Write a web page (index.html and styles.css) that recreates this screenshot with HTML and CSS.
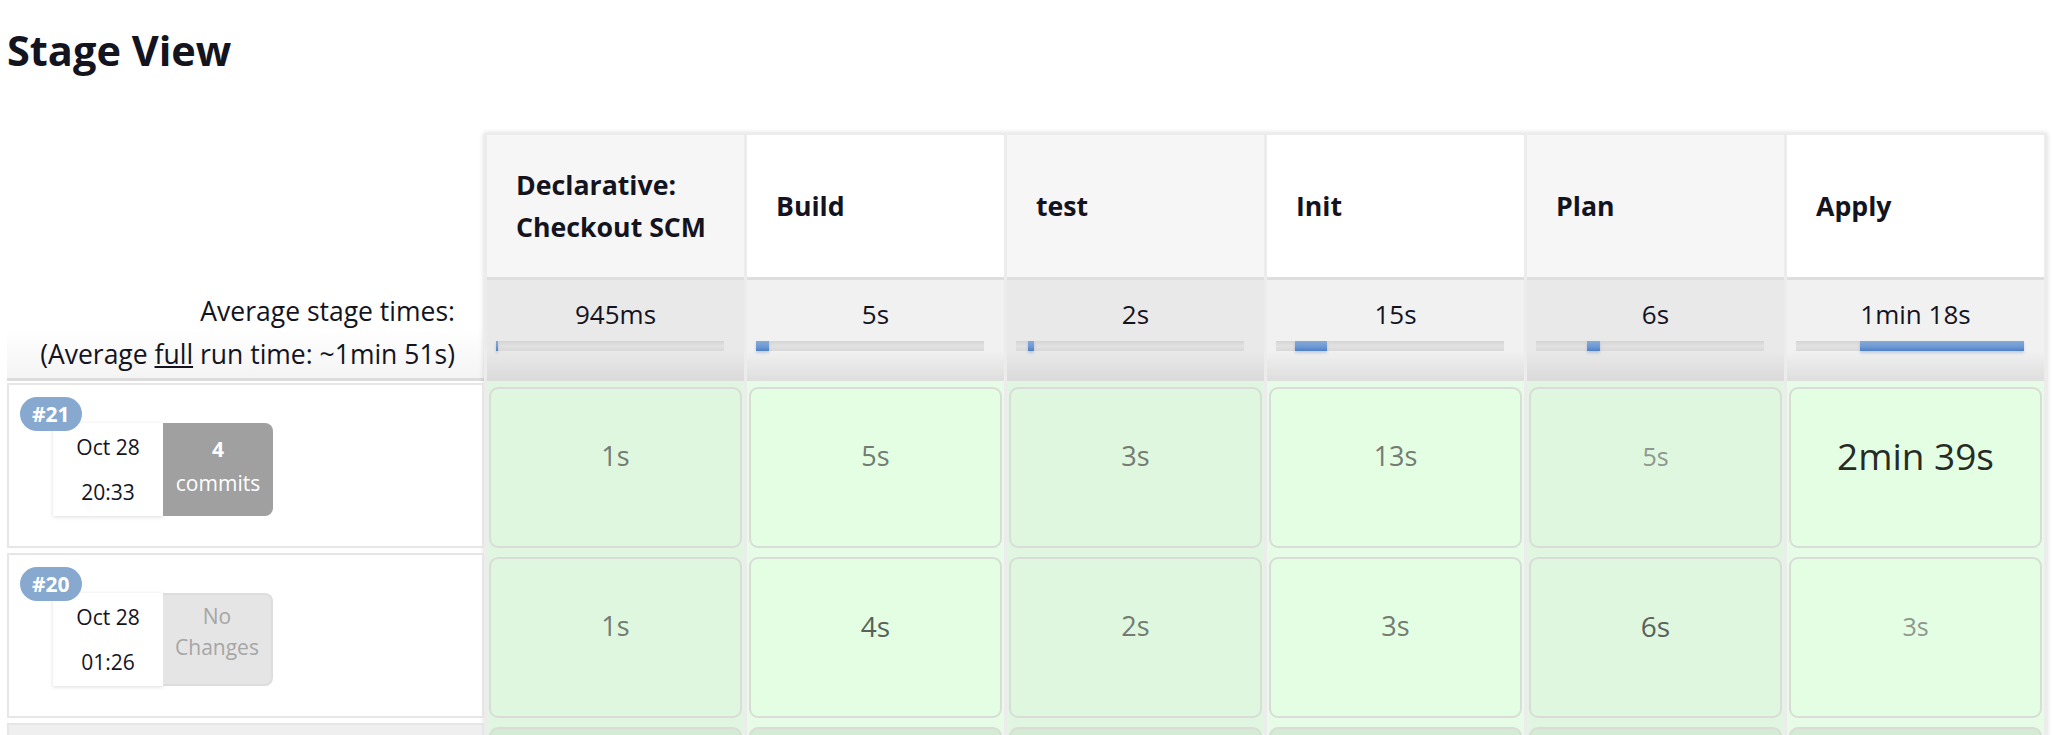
FILE: index.html
```html
<!DOCTYPE html>
<html>
<head>
<meta charset="utf-8">
<title>Stage View</title>
<link rel="stylesheet" href="styles.css">
</head>
<body>
<h2 class="title">Stage View</h2>
<div class="stage-view">
  <div class="left">
    <div class="left-head">
      <div class="avg-label">Average stage times:<br>(Average <u>full</u> run time: ~1min 51s)</div>
    </div>
    <div class="build-row">
      <div class="build-box">
        <span class="badge">#21</span>
        <div class="build-info">
          <div class="date">Oct 28<br>20:33</div>
          <div class="changes commits"><b>4</b><br>commits</div>
        </div>
      </div>
    </div>
    <div class="build-row">
      <div class="build-box">
        <span class="badge">#20</span>
        <div class="build-info">
          <div class="date">Oct 28<br>01:26</div>
          <div class="changes none">No<br>Changes</div>
        </div>
      </div>
    </div>
    <div class="build-row">
      <div class="build-box gray"></div>
    </div>
  </div>

  <div class="table">
    <div class="col odd">
      <div class="col-head"><span>Declarative:<br>Checkout SCM</span></div>
      <div class="col-avg"><div class="avg">945ms</div><div class="bar"><i style="left:0;width:2px"></i></div></div>
      <div class="cell"><div class="card mid">1s</div></div>
      <div class="cell"><div class="card mid">1s</div></div>
      <div class="cell"><div class="card next"></div></div>
    </div>
    <div class="col even">
      <div class="col-head"><span>Build</span></div>
      <div class="col-avg"><div class="avg">5s</div><div class="bar"><i style="left:0;width:13px"></i></div></div>
      <div class="cell"><div class="card mid">5s</div></div>
      <div class="cell"><div class="card dark">4s</div></div>
      <div class="cell"><div class="card next"></div></div>
    </div>
    <div class="col odd">
      <div class="col-head"><span>test</span></div>
      <div class="col-avg"><div class="avg">2s</div><div class="bar"><i style="left:12px;width:6px"></i></div></div>
      <div class="cell"><div class="card mid">3s</div></div>
      <div class="cell"><div class="card mid">2s</div></div>
      <div class="cell"><div class="card next"></div></div>
    </div>
    <div class="col even">
      <div class="col-head"><span>Init</span></div>
      <div class="col-avg"><div class="avg">15s</div><div class="bar"><i style="left:19px;width:32px"></i></div></div>
      <div class="cell"><div class="card mid">13s</div></div>
      <div class="cell"><div class="card mid">3s</div></div>
      <div class="cell"><div class="card next"></div></div>
    </div>
    <div class="col odd">
      <div class="col-head"><span>Plan</span></div>
      <div class="col-avg"><div class="avg">6s</div><div class="bar"><i style="left:51px;width:13px"></i></div></div>
      <div class="cell"><div class="card light">5s</div></div>
      <div class="cell"><div class="card dark">6s</div></div>
      <div class="cell"><div class="card next"></div></div>
    </div>
    <div class="col even">
      <div class="col-head"><span>Apply</span></div>
      <div class="col-avg"><div class="avg">1min 18s</div><div class="bar"><i style="left:64px;width:164px"></i></div></div>
      <div class="cell"><div class="card big">2min 39s</div></div>
      <div class="cell"><div class="card light">3s</div></div>
      <div class="cell"><div class="card next"></div></div>
    </div>
  </div>
</div>
</body>
</html>
```

FILE: styles.css
```css
html, body {
  margin: 0;
  padding: 0;
  background: #ffffff;
}
body {
  padding: 0 7px;
  font-family: "Open Sans", "Noto Sans", "Liberation Sans", sans-serif;
  color: #14141f;
  overflow: hidden;
}
.title {
  margin: 20px 0 53px 0;
  font-size: 41.5px;
  line-height: 60px;
  font-weight: 700;
  color: #14141f;
}
.stage-view {
  display: flex;
  align-items: flex-start;
}
/* left column */
.left {
  width: 477px;
  flex: none;
}
.left-head {
  height: 245px;
  border-bottom: 3px solid #dcdcdc;
  background: linear-gradient(to bottom, #ffffff 80%, #f4f4f4 100%);
  display: flex;
  align-items: flex-end;
  justify-content: flex-end;
}
.avg-label {
  font-size: 26.5px;
  line-height: 43px;
  text-align: right;
  padding: 0 29px 2px 0;
  color: #14141f;
}
.build-row {
  height: 170px;
  padding-top: 2px;
  box-sizing: border-box;
}
.build-box {
  position: relative;
  height: 165px;
  box-sizing: border-box;
  border: 2px solid #e6e6e6;
  background: #ffffff;
  padding: 38px 0 0 44px;
}
.build-box.gray {
  background: #efefef;
}
.badge {
  position: absolute;
  left: 11px;
  top: 12px;
  height: 34px;
  line-height: 34px;
  padding: 0 12px;
  border-radius: 17px;
  background: #87a9d0;
  color: #ffffff;
  font-weight: 700;
  font-size: 21px;
  z-index: 2;
}
.build-info {
  display: flex;
}
.date {
  width: 110px;
  height: 93px;
  box-sizing: border-box;
  padding-top: 2px;
  background: #ffffff;
  box-shadow: 0 1px 4px rgba(0, 0, 0, 0.14);
  text-align: center;
  font-size: 21px;
  line-height: 45px;
  color: #14141f;
}
.changes {
  width: 110px;
  height: 93px;
  box-sizing: border-box;
  border-radius: 0 8px 8px 0;
  text-align: center;
  font-size: 21px;
}
.commits {
  background: #a0a0a0;
  color: #ffffff;
  padding-top: 9px;
  line-height: 34px;
}
.none {
  background: #e5e5e5;
  color: #a6a6a6;
  padding-top: 6px;
  line-height: 31px;
  border: 2px solid #dddddd;
  border-left: none;
}
/* table */
.table {
  display: flex;
  gap: 3px;
  padding: 2px 3px 0 3px;
  background: #ececec;
  box-shadow: 0 0 5px rgba(0, 0, 0, 0.16);
}
.col {
  width: 257px;
  flex: none;
  display: flex;
  flex-direction: column;
}
.col-head {
  height: 142px;
  display: flex;
  align-items: center;
  padding-left: 29px;
  font-weight: 700;
  font-size: 26.7px;
  line-height: 42px;
  color: #14141f;
}
.odd .col-head { background: #f6f6f6; }
.even .col-head { background: #ffffff; }
.col-avg {
  height: 104px;
  box-sizing: border-box;
  border-top: 3px solid #dedede;
  padding: 16px 0 0 9px;
}
.odd .col-avg { background: linear-gradient(to bottom, #e9e9e9 70%, #dadada 100%); }
.even .col-avg { background: linear-gradient(to bottom, #f1f1f1 70%, #dedede 100%); }
.avg {
  text-align: center;
  padding-right: 9px;
  font-size: 26px;
  line-height: 36px;
  color: #14141f;
}
.bar {
  position: relative;
  margin-top: 9px;
  width: 228px;
  height: 10px;
  background: linear-gradient(to bottom, #d4d4d4 0%, #e2e2e2 50%, #d8d8d8 100%);
}
.bar i {
  position: absolute;
  top: 0;
  height: 10px;
  background: linear-gradient(to bottom, #86aad8 0%, #6b98d4 60%, #4f7fc4 100%);
  box-shadow: 0 2px 3px rgba(60, 100, 170, 0.25);
}
.cell {
  height: 170px;
  box-sizing: border-box;
  padding: 6px 2px 3px 2px;
}
.odd .cell { background: #e1f6e1; }
.even .cell { background: #e6fce6; }
.card {
  height: 161px;
  box-sizing: border-box;
  border: 2px solid #d9dcd9;
  border-radius: 9px;
  text-align: center;
  padding-top: 47px;
  line-height: 40px;
  font-size: 27px;
}
.odd .card { background: #dff7df; }
.even .card { background: #e4fee4; }
.card.next { background: #d4ebd4; }
.card.light { color: #8f978f; font-size: 25px; }
.card.mid { color: #737b73; }
.card.dark { color: #596159; font-size: 28px; }
.card.big { color: #262b26; font-size: 37px; }
```
